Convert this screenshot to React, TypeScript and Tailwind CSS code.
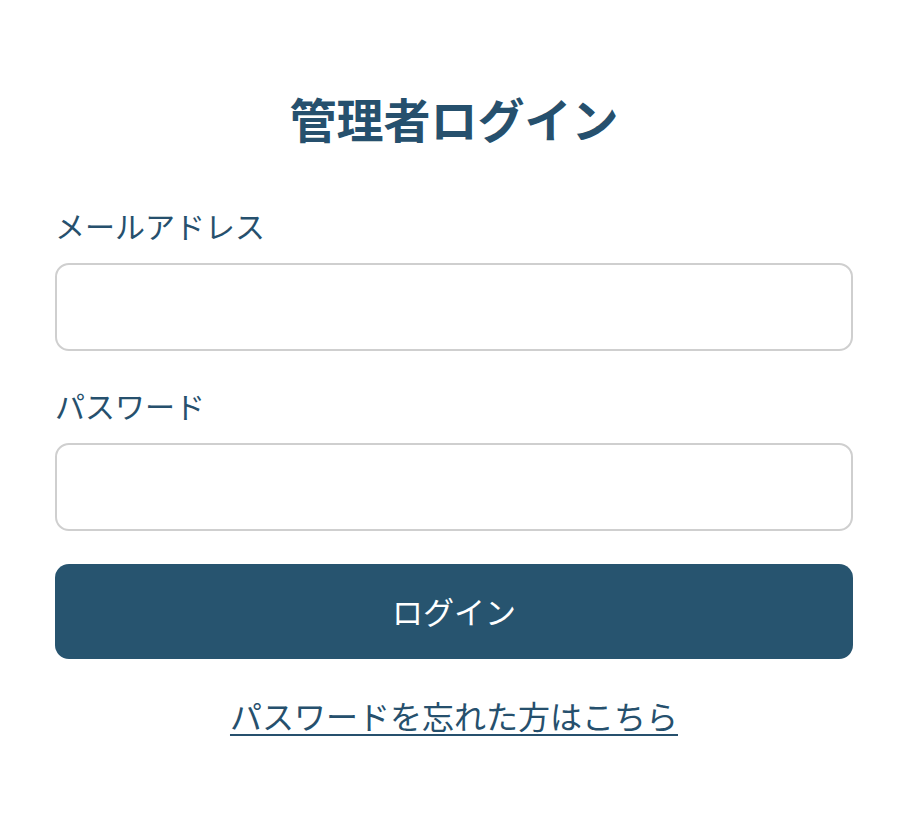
export default function App() {
  const font = { fontFamily: '"Noto Sans CJK JP", "Noto Sans", sans-serif' };
  return (
    <div className="min-h-[820px] w-full bg-white text-[#26506d]" style={font}>
      <div className="flex flex-col pl-[55px] pr-[53px] pt-[82px]">
        <h1 className="text-center text-[47px] font-bold leading-[72px] text-[#26506d]">管理者ログイン</h1>
        <label className="mt-[48px] text-[30px] leading-[46px]">メールアドレス</label>
        <input
          type="email"
          className="mt-[15px] h-[88px] w-full rounded-[14px] border-2 border-[#cfcfcf] bg-white px-4 text-[28px] outline-none"
        />
        <label className="mt-[31px] text-[30px] leading-[46px]">パスワード</label>
        <input
          type="password"
          className="mt-[15px] h-[88px] w-full rounded-[14px] border-2 border-[#cfcfcf] bg-white px-4 text-[28px] outline-none"
        />
        <button className="mt-[33px] h-[95px] w-full rounded-[14px] bg-[#27546f] text-[31px] font-normal text-white">
          ログイン
        </button>
        <div className="mt-[33px] text-center leading-[46px]">
          <a href="#" className="text-[32px] text-[#26506d] underline decoration-2 underline-offset-[5px]">
            パスワードを忘れた方はこちら
          </a>
        </div>
      </div>
    </div>
  );
}
